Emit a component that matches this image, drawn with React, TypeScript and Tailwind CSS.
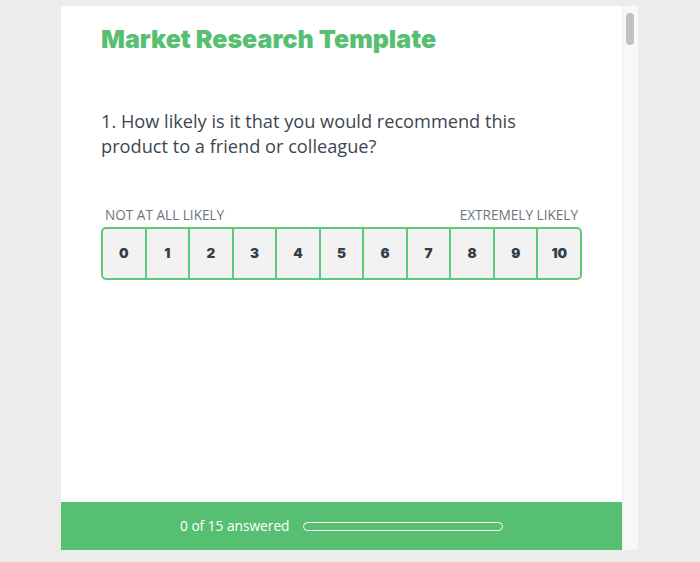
import React from "react";

export default function App() {
  const nums = [0, 1, 2, 3, 4, 5, 6, 7, 8, 9, 10];
  return (
    <div className="w-[700px] h-[562px] bg-[#ebeceb] pt-[6px] pl-[61px] flex overflow-hidden">
      <div className="w-[561px] h-[544px] bg-white flex flex-col">
        <div className="flex-1 pl-[40px] pr-[40px]">
          <h1
            className="mt-[17px] text-[25px] leading-[32px] font-black text-[#57bf72]"
            style={{ fontFamily: "Inter, 'Open Sans', sans-serif" }}
          >
            Market Research Template
          </h1>
          <p
            className="mt-[54px] text-[18.2px] leading-[25px] text-[#3d4650] w-[440px]"
            style={{ fontFamily: "'Open Sans', 'Noto Sans', sans-serif" }}
          >
            1. How likely is it that you would recommend this product to a friend or colleague?
          </p>
          <div className="mt-[48px] w-[481px]">
            <div
              className="flex justify-between px-[4px] text-[13.6px] leading-[16px] text-[#6b7580] uppercase"
              style={{ fontFamily: "'Open Sans', 'Noto Sans', sans-serif" }}
            >
              <span>Not at all likely</span>
              <span>Extremely likely</span>
            </div>
            <div className="mt-[4px] flex h-[53px]">
              {nums.map((n, i) => (
                <div
                  key={n}
                  className={
                    "flex-1 flex items-center justify-center bg-[#f2f2f2] border-2 border-[#5ec97a] text-[13.5px] font-black text-[#333e48] " +
                    (i > 0 ? "-ml-[2px] " : "") +
                    (i === 0 ? "rounded-l-[5px]" : i === 10 ? "rounded-r-[5px]" : "")
                  }
                  style={{ fontFamily: "Inter, sans-serif" }}
                >
                  {n}
                </div>
              ))}
            </div>
          </div>
        </div>
        <div className="h-[48px] bg-[#57bf72] flex items-center pl-[119px]">
          <span
            className="text-[13.7px] text-white"
            style={{ fontFamily: "'Open Sans', 'Noto Sans', sans-serif" }}
          >
            0 of 15 answered
          </span>
          <div className="ml-[14px] w-[200px] h-[9px] rounded-full border-[1.5px] border-white"></div>
        </div>
      </div>
      <div className="w-[16px] h-[544px] bg-[#f8f8f8] border-l border-[#ececec] pt-[7px] pl-[3px]">
        <div className="w-[8px] h-[32px] rounded-full bg-[#c1c1c1]"></div>
      </div>
    </div>
  );
}
